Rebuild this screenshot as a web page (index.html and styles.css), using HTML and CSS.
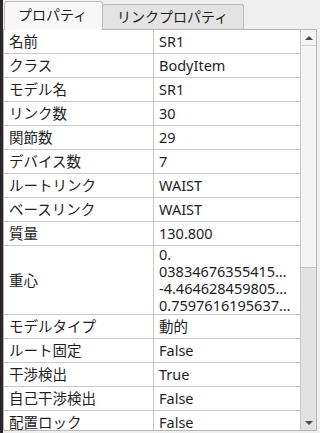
FILE: index.html
```html
<!DOCTYPE html>
<html lang="ja">

<head>
    <meta charset="UTF-8">
    <meta name="viewport" content="width=device-width, initial-scale=1.0">
    <title>プロパティ</title>
    <link rel="stylesheet" href="styles.css">
</head>

<body>
    <div class="window">
        <div class="edge"></div>

        <div class="panel">
            <!-- Tabs -->
            <div class="tabs">
                <div class="tab active">プロパティ</div>
                <div class="tab">リンクプロパティ</div>
            </div>

            <!-- Property table -->
            <div class="frame">
                <div class="view">
                    <table class="props">
                        <tr><td class="key">名前</td><td>SR1</td></tr>
                        <tr><td class="key">クラス</td><td>BodyItem</td></tr>
                        <tr><td class="key">モデル名</td><td>SR1</td></tr>
                        <tr><td class="key">リンク数</td><td>30</td></tr>
                        <tr><td class="key">関節数</td><td>29</td></tr>
                        <tr><td class="key">デバイス数</td><td>7</td></tr>
                        <tr><td class="key">ルートリンク</td><td>WAIST</td></tr>
                        <tr><td class="key">ベースリンク</td><td>WAIST</td></tr>
                        <tr><td class="key">質量</td><td>130.800</td></tr>
                        <tr class="multi">
                            <td class="key">重心</td>
                            <td>0.<br>03834676355415…<br>-4.464628459805…<br>0.7597616195637…</td>
                        </tr>
                        <tr><td class="key">モデルタイプ</td><td>動的</td></tr>
                        <tr><td class="key">ルート固定</td><td>False</td></tr>
                        <tr><td class="key">干渉検出</td><td>True</td></tr>
                        <tr><td class="key">自己干渉検出</td><td>False</td></tr>
                        <tr><td class="key">配置ロック</td><td>False</td></tr>
                    </table>
                </div>

                <!-- Scrollbar -->
                <div class="scrollbar">
                    <div class="arrow up"></div>
                    <div class="thumb"></div>
                    <div class="trough"></div>
                    <div class="arrow down"></div>
                </div>
            </div>
        </div>
    </div>
</body>

</html>
```

FILE: styles.css
```css
/* General Styles */
body {
    margin: 0;
    padding: 0;
    background-color: #efefef;
    color: #1e1e1e;
    font-family: "Noto Sans", "Noto Sans CJK JP", sans-serif;
    font-size: 14px;
}

.window {
    display: flex;
    height: 433px;
    overflow: hidden;
}

.edge {
    width: 3px;
    background-color: #2a2629;
    flex-shrink: 0;
}

.panel {
    flex: 1;
    display: flex;
    flex-direction: column;
    margin-right: 3px;
}

/* Tabs */
.tabs {
    display: flex;
    align-items: flex-end;
    height: 29px;
    padding-left: 1px;
    position: relative;
    z-index: 1;
}

.tab {
    height: 24px;
    line-height: 24px;
    padding: 0 15px 0 14px;
    background-color: #e3e3e3;
    border: 1px solid #bcbcbc;
    border-bottom: none;
    border-radius: 3px 3px 0 0;
    margin-left: -1px;
}

.tab.active {
    height: 28px;
    line-height: 26px;
    width: 71px;
    padding: 0 13px;
    background-color: #f7f7f7;
    margin-bottom: -1px;
    margin-left: 0;
}

/* Frame */
.frame {
    display: flex;
    height: 400px;
    border: 1px solid #b6b6b6;
    background-color: #f7f7f7;
}

.view {
    flex: 1;
    overflow: hidden;
    background-color: #ffffff;
}

.props {
    width: 100%;
    border-collapse: collapse;
    table-layout: fixed;
    font-size: 14.5px;
}

.props td {
    padding: 3px 5px;
    line-height: 17px;
    border-bottom: 1px solid #c9c9c9;
    white-space: nowrap;
    overflow: hidden;
}

.props td.key {
    width: 139px;
    border-right: 1px solid #c9c9c9;
}

.props tr.multi td {
    padding-top: 0;
    padding-bottom: 0;
}

/* Scrollbar */
.scrollbar {
    width: 15px;
    display: flex;
    flex-direction: column;
    border-left: 1px solid #c6c6c6;
    background-color: #e2e2e2;
}

.arrow {
    height: 15px;
    background-color: #f3f3f3;
    display: flex;
    align-items: center;
    justify-content: center;
}

.arrow::after {
    content: "";
    width: 0;
    height: 0;
    border-left: 4px solid transparent;
    border-right: 4px solid transparent;
}

.arrow.up::after {
    border-bottom: 4px solid #4a4a4a;
}

.arrow.down {
    background-color: #e2e2e2;
}

.arrow.down::after {
    border-top: 4px solid #4a4a4a;
}

.thumb {
    height: 221px;
    background-color: #f4f4f4;
    border-top: 1px solid #d0d0d0;
    border-bottom: 1px solid #c4c4c4;
}

.trough {
    flex: 1;
}
```
